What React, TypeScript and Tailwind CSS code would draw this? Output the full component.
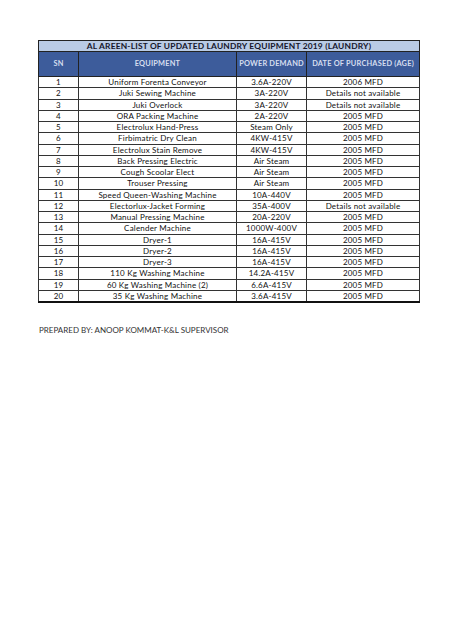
const ROWS: [string, string, string][] = [
  ['Uniform Forenta Conveyor', '3.6A-220V', '2006 MFD'],
  ['Juki Sewing Machine', '3A-220V', 'Details not available'],
  ['Juki Overlock', '3A-220V', 'Details not available'],
  ['ORA Packing Machine', '2A-220V', '2005 MFD'],
  ['Electrolux Hand-Press', 'Steam Only', '2005 MFD'],
  ['Firbimatric Dry Clean', '4KW-415V', '2005 MFD'],
  ['Electrolux Stain Remove', '4KW-415V', '2005 MFD'],
  ['Back Pressing Electric', 'Air Steam', '2005 MFD'],
  ['Cough Scoolar Elect', 'Air Steam', '2005 MFD'],
  ['Trouser Pressing', 'Air Steam', '2005 MFD'],
  ['Speed Queen-Washing Machine', '10A-440V', '2005 MFD'],
  ['Electorlux-Jacket Forming', '35A-400V', 'Details not available'],
  ['Manual Pressing Machine', '20A-220V', '2005 MFD'],
  ['Calender Machine', '1000W-400V', '2005 MFD'],
  ['Dryer-1', '16A-415V', '2005 MFD'],
  ['Dryer-2', '16A-415V', '2005 MFD'],
  ['Dryer-3', '16A-415V', '2005 MFD'],
  ['110 Kg Washing Machine', '14.2A-415V', '2005 MFD'],
  ['60 Kg Washing Machine (2)', '6.6A-415V', '2005 MFD'],
  ['35 Kg Washing Machine', '3.6A-415V', '2005 MFD'],
]

export default function App() {
  return (
    <div className="w-[474px] h-[632px] bg-white pt-[40px] pl-[38px] font-['Lato',sans-serif] text-[#111]">
      <table className="border-collapse text-[8px] leading-none tracking-[0.2px] w-[381px] table-fixed border-b-2 border-b-[#111]">
        <colgroup>
          <col className="w-[40px]" />
          <col className="w-[158px]" />
          <col className="w-[70px]" />
          <col className="w-[113px]" />
        </colgroup>
        <thead>
          <tr className="h-[11px]">
            <th colSpan={4} className="bg-[#b9cbe5] border border-[#222] font-bold text-[8.4px] text-[#15152a] text-center">
              AL AREEN-LIST OF UPDATED LAUNDRY EQUIPMENT 2019 (LAUNDRY)
            </th>
          </tr>
          <tr className="h-[25px]">
            {['SN', 'EQUIPMENT', 'POWER DEMAND', 'DATE OF PURCHASED (AGE)'].map((h) => (
              <th key={h} className="bg-[#3d5c9b] border border-[#222] font-bold text-[7.4px] text-[#d6deef] text-center whitespace-nowrap">
                {h}
              </th>
            ))}
          </tr>
        </thead>
        <tbody>
          {ROWS.map((r, i) => (
            <tr key={i} className="h-[11.25px]">
              <td className="border border-[#333] text-center">{i + 1}</td>
              <td className="border border-[#333] text-center">{r[0]}</td>
              <td className="border border-[#333] text-center">{r[1]}</td>
              <td className="border border-[#333] text-center">{r[2]}</td>
            </tr>
          ))}
        </tbody>
      </table>
      <p className="mt-[21px] ml-[1px] text-[8px] text-[#333]">PREPARED BY: ANOOP KOMMAT-K&amp;L SUPERVISOR</p>
    </div>
  )
}
